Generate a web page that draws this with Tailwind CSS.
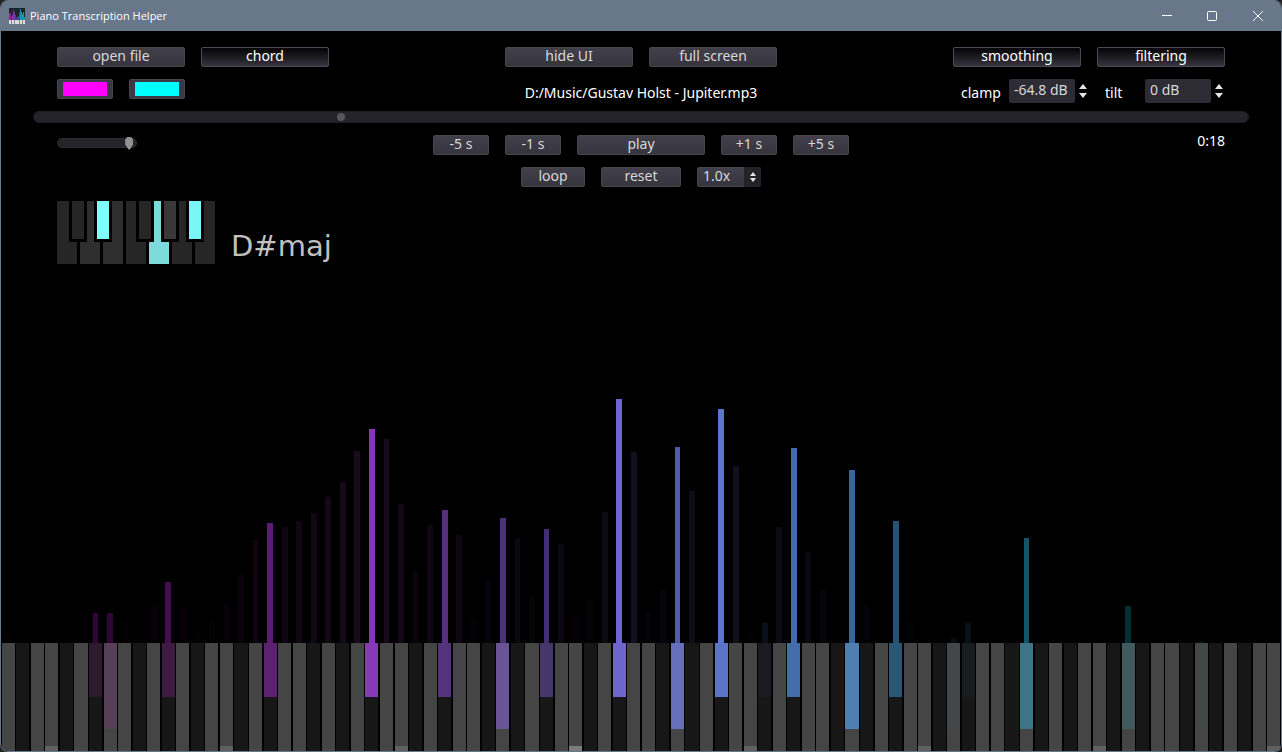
<!DOCTYPE html>
<html lang="en">
<head>
<meta charset="utf-8">
<title>Piano Transcription Helper</title>
<script src="https://cdn.jsdelivr.net/npm/@tailwindcss/browser@4"></script>
</head>
<body class="bg-[#222]">
<div class="flex flex-col h-screen rounded-lg overflow-hidden border border-t-0 border-[#687789] bg-black text-white text-sm leading-5 font-['Noto_Sans',sans-serif]">
  <header class="flex items-center h-[31px] shrink-0 bg-[#687789] pl-2 text-[11px] font-['Open_Sans',sans-serif]">
    <svg class="size-4 mr-[5px]" viewBox="0 0 16 16" shape-rendering="crispEdges" aria-hidden="true">
      <path d="M0 0h16v16H0z" fill="#20222a"/>
      <path d="M0 5h2v7H0z" fill="#a0189c"/><path d="M2 8h1v4H2z" fill="#7d1c8c"/>
      <path d="M3 7h1v5H3zM4 2h1v10H4zM5 4h1v8H5z" fill="#7538a8"/><path d="M6 7h1v5H6zM7 9h2v3H7z" fill="#5a3088"/>
      <path d="M9 8h1v4H9zM10 4h1v8h-1z" fill="#2c5a98"/><path d="M11 1h1v11h-1zM12 4h1v8h-1z" fill="#2388b4"/>
      <path d="M13 6h1v6h-1zM14 4h1v8h-1zM15 9h1v3h-1z" fill="#129a9e"/>
      <path d="M0 12h16v4H0z" fill="#dcdcdc"/>
      <path d="M2 12h1v4H2zM5 12h1v4H5zM10 12h1v4h-1zM13 12h1v4h-1z" fill="#86868c"/>
    </svg>
    <h1>Piano Transcription Helper</h1>
    <div class="ml-auto flex self-stretch">
      <button class="w-[46px] grid place-items-center" aria-label="Minimize"><svg class="size-3" viewBox="0 0 12 12" fill="none" stroke="#fff"><path d="M2 5.500h10"/></svg></button>
      <button class="w-[46px] grid place-items-center" aria-label="Maximize"><svg class="size-3" viewBox="0 0 12 12" fill="none" stroke="#fff"><rect x="1.500" y="1.500" width="9" height="9" rx="1"/></svg></button>
      <button class="w-[46px] grid place-items-center" aria-label="Close"><svg class="size-3" viewBox="0 0 12 12" fill="none" stroke="#fff"><path d="M1 1l10 10M11 1L1 11"/></svg></button>
    </div>
  </header>

  <main class="flex flex-col grow pt-4">
    <div class="grid grid-cols-[1fr_auto_1fr] items-start px-14 h-8 shrink-0">
      <div class="flex gap-4">
        <button class="w-32 h-5 leading-4 pb-0.5 rounded-xs border border-[#47454f] bg-linear-to-b from-[#413f49] to-[#36343d] text-[#d8d8d8]">open file</button>
        <button aria-pressed="true" class="w-32 h-5 leading-4 pb-0.5 rounded-xs border border-[#4b4a58] bg-linear-to-b from-[#060608] to-[#36343d] text-white">chord</button>
      </div>
      <div class="flex gap-4">
        <button class="w-32 h-5 leading-4 pb-0.5 rounded-xs border border-[#47454f] bg-linear-to-b from-[#413f49] to-[#36343d] text-[#d8d8d8]">hide UI</button>
        <button class="w-32 h-5 leading-4 pb-0.5 rounded-xs border border-[#47454f] bg-linear-to-b from-[#413f49] to-[#36343d] text-[#d8d8d8]">full screen</button>
      </div>
      <div class="flex gap-4 justify-end">
        <button aria-pressed="true" class="w-32 h-5 leading-4 pb-0.5 rounded-xs border border-[#4b4a58] bg-linear-to-b from-[#060608] to-[#36343d] text-white">smoothing</button>
        <button aria-pressed="true" class="w-32 h-5 leading-4 pb-0.5 rounded-xs border border-[#4b4a58] bg-linear-to-b from-[#060608] to-[#36343d] text-white">filtering</button>
      </div>
    </div>

    <div class="grid grid-cols-[1fr_auto_1fr] items-start px-14 h-8 shrink-0">
      <div class="flex gap-4">
        <button aria-label="Low note colour" class="w-14 h-5 px-[5px] pt-0.5 pb-0.5 rounded-xs border border-[#47454f] bg-[#3a3842]"><span class="block h-3.5 bg-[#ff00ff]"></span></button>
        <button aria-label="High note colour" class="w-14 h-5 px-[5px] pt-0.5 pb-0.5 rounded-xs border border-[#47454f] bg-[#3a3842]"><span class="block h-3.5 bg-[#00ffff]"></span></button>
      </div>
      <p class="pt-1">D:/Music/Gustav Holst - Jupiter.mp3</p>
      <div class="flex justify-end gap-4">
        <div class="flex">
          <label for="clamp" class="w-12 pt-1">clamp</label>
          <input id="clamp" value="-64.8 dB" class="w-[66px] h-6 px-[5px] pb-1 rounded-xs bg-[#2d2b34] text-[#d8d8d8] outline-none">
          <div class="w-3.5 flex flex-col items-end pt-1">
            <button aria-label="Raise clamp" class="h-2"><svg class="w-3 h-2" viewBox="0 0 10 8"><path d="M1 6L5 1l4 5z" fill="#e6e6e6"/></svg></button>
            <button aria-label="Lower clamp" class="h-2"><svg class="w-3 h-2" viewBox="0 0 10 8"><path d="M1 2h8L5 7z" fill="#e6e6e6"/></svg></button>
          </div>
        </div>
        <div class="flex">
          <label for="tilt" class="w-10 pt-1">tilt</label>
          <input id="tilt" value="0 dB" class="w-[66px] h-6 px-[5px] pb-1 rounded-xs bg-[#2d2b34] text-[#d8d8d8] outline-none">
          <div class="w-3.5 flex flex-col items-end pt-1">
            <button aria-label="Raise tilt" class="h-2"><svg class="w-3 h-2" viewBox="0 0 10 8"><path d="M1 6L5 1l4 5z" fill="#e6e6e6"/></svg></button>
            <button aria-label="Lower tilt" class="h-2"><svg class="w-3 h-2" viewBox="0 0 10 8"><path d="M1 2h8L5 7z" fill="#e6e6e6"/></svg></button>
          </div>
        </div>
      </div>
    </div>

    <div class="px-8 h-6 shrink-0">
      <input type="range" aria-label="Position" min="0" max="1000" value="251" class="block w-full h-3 m-0 appearance-none rounded-full bg-[#25242a] border border-[#1d1c21] [&::-webkit-slider-thumb]:appearance-none [&::-webkit-slider-thumb]:size-2 [&::-webkit-slider-thumb]:rounded-full [&::-webkit-slider-thumb]:bg-[#57565a]">
    </div>

    <div class="grid grid-cols-[1fr_auto_1fr] items-start px-14 h-8 shrink-0">
      <input type="range" aria-label="Volume" min="0" max="100" value="96" class="block w-20 h-4 m-0 appearance-none bg-transparent [&::-webkit-slider-runnable-track]:h-2.5 [&::-webkit-slider-runnable-track]:rounded-full [&::-webkit-slider-runnable-track]:bg-[#25242a] [&::-webkit-slider-runnable-track]:border [&::-webkit-slider-runnable-track]:border-[#2e2d33] [&::-webkit-slider-thumb]:appearance-none [&::-webkit-slider-thumb]:w-2 [&::-webkit-slider-thumb]:h-[13px] [&::-webkit-slider-thumb]:-mt-0.5 [&::-webkit-slider-thumb]:bg-[#929292] [&::-webkit-slider-thumb]:[clip-path:polygon(25%_0,75%_0,100%_20%,100%_55%,65%_90%,50%_100%,35%_90%,0_55%,0_20%)]">
      <div class="flex gap-4">
        <button class="w-14 h-5 leading-4 pb-0.5 rounded-xs border border-[#47454f] bg-linear-to-b from-[#413f49] to-[#36343d] text-[#d8d8d8]">-5 s</button>
        <button class="w-14 h-5 leading-4 pb-0.5 rounded-xs border border-[#47454f] bg-linear-to-b from-[#413f49] to-[#36343d] text-[#d8d8d8]">-1 s</button>
        <button class="w-32 h-5 leading-4 pb-0.5 rounded-xs border border-[#47454f] bg-linear-to-b from-[#413f49] to-[#36343d] text-[#d8d8d8]">play</button>
        <button class="w-14 h-5 leading-4 pb-0.5 rounded-xs border border-[#47454f] bg-linear-to-b from-[#413f49] to-[#36343d] text-[#d8d8d8]">+1 s</button>
        <button class="w-14 h-5 leading-4 pb-0.5 rounded-xs border border-[#47454f] bg-linear-to-b from-[#413f49] to-[#36343d] text-[#d8d8d8]">+5 s</button>
      </div>
      <time class="justify-self-end -mt-1">0:18</time>
    </div>

    <div class="flex gap-4 justify-center h-8 shrink-0">
      <button class="w-16 h-5 leading-4 pb-0.5 rounded-xs border border-[#47454f] bg-linear-to-b from-[#413f49] to-[#36343d] text-[#d8d8d8]">loop</button>
      <button class="w-20 h-5 leading-4 pb-0.5 rounded-xs border border-[#47454f] bg-linear-to-b from-[#413f49] to-[#36343d] text-[#d8d8d8]">reset</button>
      <div class="relative w-16 h-5">
        <select aria-label="Speed" class="block w-full h-5 leading-4 pl-[5px] pb-0.5 appearance-none rounded-xs border border-[#47454f] bg-linear-to-b from-[#413f49] to-[#36343d] text-[#d8d8d8]"><option>0.5x</option><option selected>1.0x</option></select>
        <span class="absolute inset-y-0 right-0 w-[17px] grid place-items-center rounded-r-xs bg-[#232228] pointer-events-none"><svg class="w-2 h-3" viewBox="0 0 8 12"><path d="M1 5l3-4 3 4zM1 7h6l-3 4z" fill="#e6e6e6"/></svg></span>
      </div>
    </div>

    <section class="flex items-end gap-4 pl-14 pt-0.5 shrink-0" aria-label="Detected chord">
      <svg class="w-[158px] h-[63px]" viewBox="0 0 158 63" shape-rendering="crispEdges" aria-hidden="true">
        <path d="M0 0h20v63H0zM69 0h20v63H69zM115 0h20v63h-20zM138 0h20v63h-20z" fill="#262626"/>
        <path d="M23 0h20v63H23zM46 0h20v63H46z" fill="#2f2f2f"/>
        <path d="M92 0h20v63H92z" fill="#7ddbdb"/>
        <path d="M12 0h18v41H12zM37 0h18v41H37zM79 0h18v41H79zM104 0h18v41h-18zM129 0h18v41h-18z" fill="#000"/>
        <path d="M15 0h12v38H15zM82 0h12v38H82z" fill="#262626"/>
        <path d="M40 0h12v38H40z" fill="#80ffff"/><path d="M107 0h12v38h-12z" fill="#383838"/><path d="M132 0h12v38h-12z" fill="#7bf6f6"/>
      </svg>
      <h2 class="text-[29px] leading-9 font-normal text-[#c0c0c0] font-['DejaVu_Sans',sans-serif]">D#maj</h2>
    </section>

    <section id="spectrum" class="flex grow" aria-label="Note levels and keyboard"></section>
  </main>
</div>
<template id="note">
  <div class="flex flex-col flex-1 min-w-0">
    <div class="flex flex-col justify-end items-center grow"><div data-bar class="w-[40%]"></div></div>
    <div data-key class="flex flex-col justify-between h-[108px] w-[90%] mx-auto"><div data-lit></div><div data-mark></div></div>
  </div>
</template>
<script>
// Level of each of the 88 notes, from A0 up
const levels = [10,0,0,0,0,9,30,30,20,9,38,61,36,13,22,40,68,103,120,116,122,130,146,161,192,214,204,139,71,118,133,108,25,62,125,105,45,114,99,28,43,131,244,191,31,53,196,152,8,234,177,14,20,116,195,90,53,0,173,37,0,122,22,0,0,5,20,0,0,0,105,0,0,0,0,0,0,37,0,0,0,0,1,0,0,0,0,0];
// Peaks: bar colour, key colour
const peaks = {
  6:['#2f0635','#2f192d'], 7:['#2f0635','#573f57'], 11:['#460c50','#3f1a43'], 18:['#5f1a78','#5c2270'],
  25:['#8537ba','#873ab7'], 30:['#57307f','#54337c'], 34:['#4b3179','#6a5494'], 37:['#412f72','#46366b'],
  42:['#6e64d2','#6e65cf'], 46:['#525bae','#666fba'], 49:['#5b74cc','#5b74c8'], 52:['#0b0f1a','#1a1b20'],
  54:['#426cac','#446eaa'], 58:['#34689f','#4e7fb0'], 61:['#245375','#2b5675'], 65:['#051015','#444648'],
  66:['#061218','#181e20'], 70:['#155367','#3f7386'], 77:['#052d34','#405a5e'], 82:['#031c1e','#434745']
};
const black = [1,4,6,9,11];
const spectrum = document.getElementById('spectrum'), note = document.getElementById('note');
levels.forEach((level, i) => {
  const n = note.content.cloneNode(true);
  const part = name => n.querySelector('[data-' + name + ']');
  const isBlack = black.includes(i % 12), peak = peaks[i];
  const t = i / 87, a = Math.min(1, level / 190);
  part('bar').style.height = level + 'px';
  part('bar').style.background = peak ? peak[0] :
    `rgb(${Math.round((32 - 30 * t) * a + 2 * (1 - t))} ${Math.round((3 + 27 * t) * a)} ${Math.round(28 * a + 2)})`;
  part('key').style.background = isBlack ? '#171717' : '#454545';
  if (peak) {
    part('lit').style.height = isBlack ? '54px' : '86px';
    part('lit').style.background = peak[1];
  }
  if (i % 12 === 3) {
    part('mark').style.height = '5px';
    part('mark').style.background = i === 39 ? '#7c7c7c' : '#606060';
  }
  spectrum.append(n);
});
</script>
</body>
</html>
